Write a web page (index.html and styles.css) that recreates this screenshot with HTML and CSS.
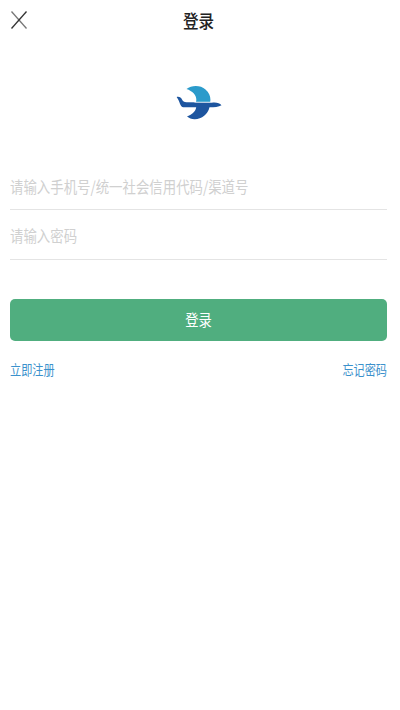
FILE: index.html
```html
<!DOCTYPE html>
<html lang="zh-CN">
<head>
<meta charset="utf-8">
<title>登录</title>
<link rel="stylesheet" href="styles.css">
</head>
<body>
<main class="page">
  <header class="header">
    <svg class="close" viewBox="0 0 18 20" width="18" height="20"><path class="fall" d="M1.5 1.5 16.5 18.5"/><path class="rise" d="M1.5 18.5 16.5 1.5"/></svg>
    <h1 class="title tall">登录</h1>
  </header>
  <svg class="logo" viewBox="0 0 46 36" width="46" height="36">
    <path fill="#2b9bcb" d="M10 4C15 0 24-.2 29 4.500C33 8 34.500 12 33.700 17H19.500C21 11 17 6.500 10 4Z"/>
    <path fill="#1d559f" d="M0 12C3 11.500 4.500 12.500 5.500 14.500C6.500 16.500 7.500 17.200 10 17.200L38 17.500C41 17.500 43.500 18.500 45 20.300C42 22.200 38 22.300 33 22.300C31.500 29 25 34.500 18 34.300C15 34.200 12.500 33 10.500 31.500C15 30 19 27 19.700 22.300H8C4.500 22.300 4 20 3 17.500C2 15 1.500 13.500 0 12Z"/>
    <path stroke="#fff" stroke-width=".7" d="M18 17.200H36"/>
  </svg>
  <form class="form">
    <label class="field"><span class="tall">请输入手机号/统一社会信用代码/渠道号</span></label>
    <label class="field"><span class="tall">请输入密码</span></label>
    <button class="submit" type="button"><span class="tall">登录</span></button>
  </form>
  <nav class="links"><a class="tall">立即注册</a><a class="tall">忘记密码</a></nav>
</main>
</body>
</html>
```
FILE: styles.css
```css
* { box-sizing: border-box; }
body {
  margin: 0;
  background: #fff;
  font-family: "Noto Sans CJK SC", sans-serif;
}
.page { height: 710px; padding: 0 13px 0 10px; overflow: hidden; }
.tall { display: inline-block; transform: scaleY(1.18); }
.header {
  display: grid;
  grid-template-columns: 18px 1fr 18px;
  align-items: center;
  height: 40px;
}
.close { fill: none; stroke-width: 1.3; }
.fall { stroke: #777; }
.rise { stroke: #333; }
.title {
  margin: 0;
  text-align: center;
  font-size: 15.6px;
  line-height: 24px;
  font-weight: 500;
  color: #222;
}
.logo { display: block; margin: 45px auto 0; transform: translateX(.5px); }
.form { margin-top: 40px; }
.field {
  display: flex;
  align-items: center;
  height: 49px;
  border-bottom: 1px solid #e4e4e4;
  font-size: 13.42px;
  line-height: 20px;
  color: #d0d0d0;
}
.field:first-child { padding-top: 1px; }
.field + .field { height: 50px; }
.submit {
  display: block;
  width: 100%;
  height: 42px;
  margin-top: 39px;
  padding: 0;
  border: 0;
  border-radius: 5px;
  background: #50ae7f;
  color: #fff;
  font: 13.33px/20px "Noto Sans CJK SC", sans-serif;
}
.links {
  display: flex;
  justify-content: space-between;
  margin-top: 18px;
  font-size: 11.15px;
  line-height: 20px;
  color: #3b91cc;
}
```
